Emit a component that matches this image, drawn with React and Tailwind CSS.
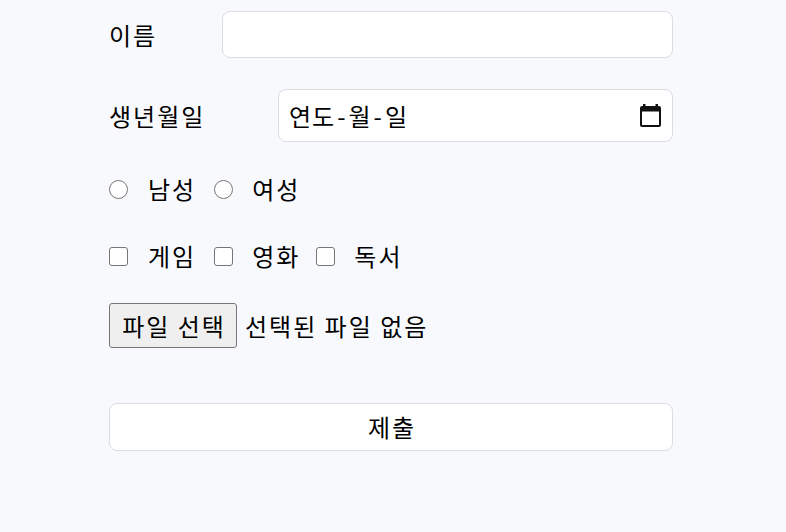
export default function App() {
  const font = { fontFamily: '"Noto Sans CJK KR", "Noto Sans", sans-serif' };
  return (
    <div className="min-h-[532px] w-full bg-[#f8f9fd] text-black" style={font}>
      <div className="ml-[109px] w-[564px] pt-[11px] flex flex-col text-[24px] leading-none tracking-[2px]">
        {/* 이름 */}
        <div className="flex items-center h-[47px]">
          <span className="w-[113px] shrink-0">이름</span>
          <div className="flex-1 h-full rounded-[8px] border border-[#dcdde2] bg-white"></div>
        </div>
        {/* 생년월일 */}
        <div className="flex items-center h-[53px] mt-[31px]">
          <span className="w-[169px] shrink-0">생년월일</span>
          <div className="flex-1 h-full rounded-[8px] border border-[#dcdde2] bg-white flex items-center pl-[10px] pr-[11px]">
            <span className="flex items-center tracking-[1px]">
              <span>연도</span>
              <span className="mx-[2px]">-</span>
              <span>월</span>
              <span className="mx-[2px]">-</span>
              <span>일</span>
            </span>
            <span className="ml-auto">
              <svg width="21" height="23" viewBox="0 0 21 23" fill="none">
                <rect x="3" y="0" width="2.5" height="4" fill="#111" />
                <rect x="15.5" y="0" width="2.5" height="4" fill="#111" />
                <rect x="1" y="3" width="19" height="19" rx="1" stroke="#111" strokeWidth="2" fill="none" />
                <rect x="1" y="3" width="19" height="4.5" fill="#111" />
              </svg>
            </span>
          </div>
        </div>
        {/* 성별 */}
        <div className="flex items-center h-[34px] mt-[30px]">
          <span className="w-[19px] h-[19px] rounded-full border border-[#767676] bg-white shrink-0"></span>
          <span className="ml-[20px]">남성</span>
          <span className="ml-[18px] w-[19px] h-[19px] rounded-full border border-[#767676] bg-white shrink-0"></span>
          <span className="ml-[19px]">여성</span>
        </div>
        {/* 취미 */}
        <div className="flex items-center h-[34px] mt-[33px]">
          <span className="w-[19px] h-[19px] rounded-[3px] border border-[#767676] bg-white shrink-0"></span>
          <span className="ml-[20px]">게임</span>
          <span className="ml-[18px] w-[19px] h-[19px] rounded-[3px] border border-[#767676] bg-white shrink-0"></span>
          <span className="ml-[19px]">영화</span>
          <span className="ml-[16px] w-[19px] h-[19px] rounded-[3px] border border-[#767676] bg-white shrink-0"></span>
          <span className="ml-[19px]">독서</span>
        </div>
        {/* 파일 */}
        <div className="flex items-center mt-[30px] h-[45px]">
          <div className="h-[45px] w-[128px] rounded-[3px] border border-[#767676] bg-[#efefef] flex items-center justify-center pl-[2px]">
            파일 선택
          </div>
          <span className="ml-[8px]">선택된 파일 없음</span>
        </div>
        {/* 제출 */}
        <div className="mt-[55px] h-[48px] rounded-[8px] border border-[#dcdde2] bg-white flex items-center justify-center pl-[2px]">
          제출
        </div>
      </div>
    </div>
  );
}
